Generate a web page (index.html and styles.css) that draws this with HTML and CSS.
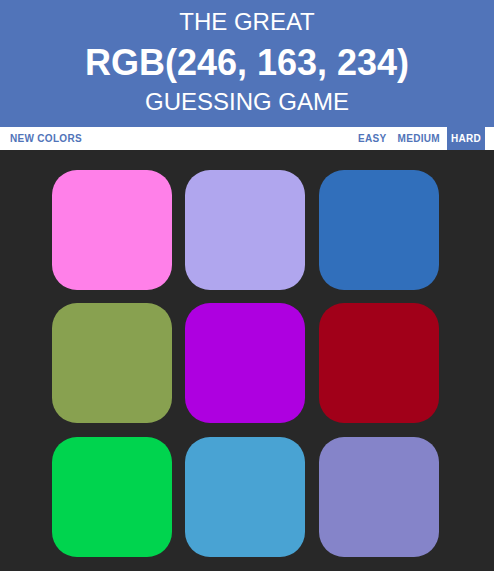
FILE: index.html
```html
<!DOCTYPE html>
<html lang="en">
<head>
<meta charset="utf-8">
<title>The Great RGB Guessing Game</title>
<link rel="stylesheet" href="styles.css">
</head>
<body>
  <header class="hero">
    <div class="hero-top">THE GREAT</div>
    <div class="hero-rgb">RGB(246, 163, 234)</div>
    <div class="hero-bottom">GUESSING GAME</div>
  </header>
  <nav class="stripe">
    <button class="btn">NEW COLORS</button>
    <span class="message"></span>
    <div class="modes">
      <button class="btn">EASY</button>
      <button class="btn">MEDIUM</button>
      <button class="btn selected">HARD</button>
    </div>
  </nav>
  <main class="board">
    <div class="square" style="background:#ff80e9"></div>
    <div class="square" style="background:#b0a6ee"></div>
    <div class="square" style="background:#316fbb"></div>
    <div class="square" style="background:#88a150"></div>
    <div class="square" style="background:#ae00e0"></div>
    <div class="square" style="background:#a10019"></div>
    <div class="square" style="background:#00d44e"></div>
    <div class="square" style="background:#49a3d3"></div>
    <div class="square" style="background:#8584c9"></div>
  </main>
</body>
</html>
```
FILE: styles.css
```css
html, body {
  margin: 0;
  padding: 0;
}
body {
  background: #282828;
  font-family: "Liberation Sans", Arial, sans-serif;
  min-height: 571px;
}
.hero {
  background: #5174b9;
  color: #fff;
  text-align: center;
  padding: 7px 0 13px;
}
.hero-top {
  font-size: 24px;
  line-height: 30px;
}
.hero-rgb {
  font-size: 36px;
  font-weight: bold;
  line-height: 52px;
}
.hero-bottom {
  font-size: 24px;
  line-height: 25px;
}
.stripe {
  background: #fff;
  height: 23px;
  display: flex;
  align-items: stretch;
  padding: 0 9px 0 6px;
}
.message {
  flex: 1;
}
.modes {
  display: flex;
  gap: 3px;
}
.btn {
  border: none;
  background: none;
  font-family: "Liberation Sans", Arial, sans-serif;
  font-size: 10px;
  font-weight: bold;
  letter-spacing: 0.3px;
  color: #5174b9;
  padding: 0 4px;
  margin: 0;
  height: 23px;
  line-height: 23px;
}
.btn.selected {
  background: #5174b9;
  color: #fff;
}
.board {
  display: grid;
  grid-template-columns: repeat(3, 120px);
  gap: 13.33px;
  padding: 20px 0 0 52px;
}
.square {
  width: 120px;
  height: 120px;
  border-radius: 25px;
}
```
